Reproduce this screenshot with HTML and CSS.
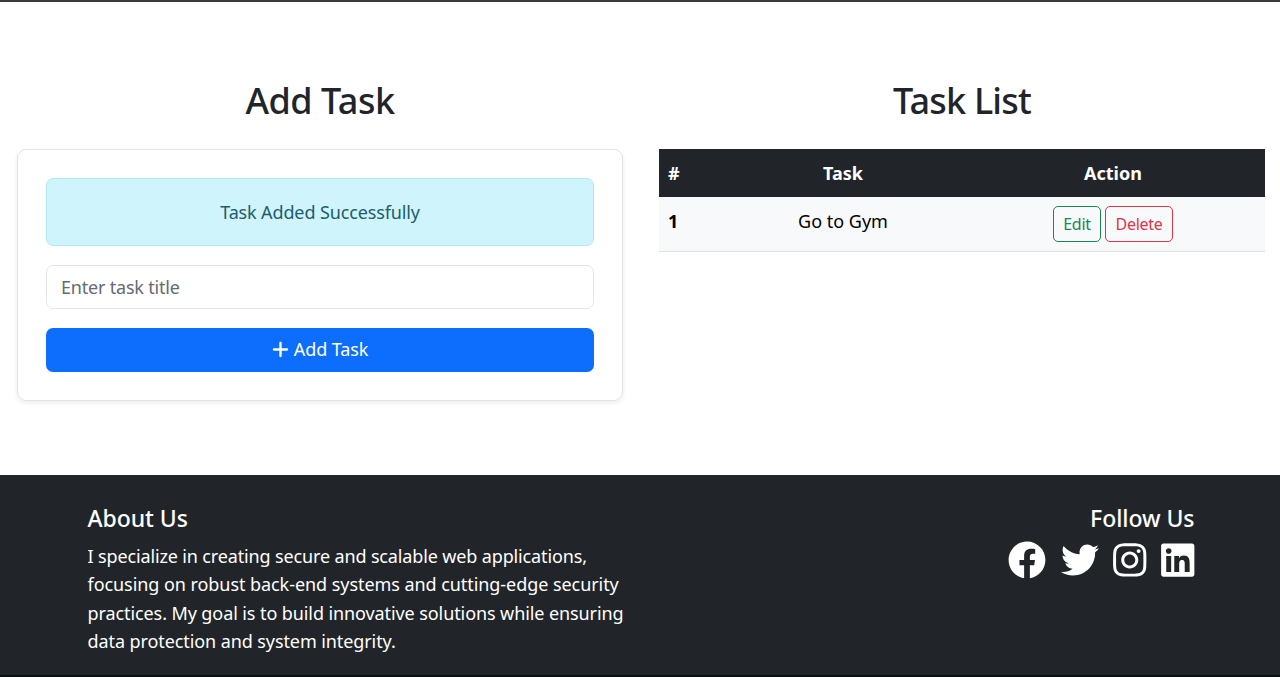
FILE: index.html
```html
<!DOCTYPE html>
<html lang="en">
<head>
<meta charset="utf-8">
<title>Task Manager</title>
<link rel="stylesheet" href="styles.css">
</head>
<body>
<main class="main">
  <section class="column">
    <h1 class="title title-add"><span>Add Task</span></h1>
    <div class="card">
      <div class="alert"><span>Task Added Successfully</span></div>
      <input class="input" type="text" placeholder="Enter task title">
      <button class="submit" type="button">
        <svg class="plus" viewBox="0 0 448 512"><path d="M256 80c0-17.700-14.300-32-32-32s-32 14.300-32 32V224H48c-17.700 0-32 14.300-32 32s14.300 32 32 32H192V432c0 17.700 14.300 32 32 32s32-14.300 32-32V288H400c17.700 0 32-14.300 32-32s-14.300-32-32-32H256V80z"/></svg>
        <span>Add Task</span>
      </button>
    </div>
  </section>
  <section class="column">
    <h1 class="title title-list"><span>Task List</span></h1>
    <table class="table">
      <colgroup><col class="col-num"><col class="col-task"><col class="col-action"></colgroup>
      <thead><tr><th class="num">#</th><th><span>Task</span></th><th class="action"><span>Action</span></th></tr></thead>
      <tbody><tr>
        <td class="num strong">1</td>
        <td><span class="task">Go to Gym</span></td>
        <td class="action"><div class="actions"><button class="btn edit" type="button">Edit</button><button class="btn delete" type="button">Delete</button></div></td>
      </tr></tbody>
    </table>
  </section>
</main>
<footer class="footer">
  <div class="about">
    <h2 class="subtitle"><span>About Us</span></h2>
    <p class="text"><span class="line-normal">I specialize in creating secure and scalable web applications,</span><br><span class="line-loose">focusing on robust back-end systems and cutting-edge security</span><br><span>practices. My goal is to build innovative solutions while ensuring</span><br><span>data protection and system integrity.</span></p>
  </div>
  <div class="follow">
    <h2 class="subtitle"><span>Follow Us</span></h2>
    <div class="social">
      <svg class="wide" viewBox="0 0 512 512"><path d="M504 256C504 119 393 8 256 8S8 119 8 256c0 123.780 90.690 226.380 209.250 245V327.690h-63V256h63v-54.640c0-62.150 37-96.480 93.670-96.480 27.140 0 55.520 4.840 55.520 4.840v61h-31.280c-30.800 0-40.410 19.120-40.410 38.730V256h68.780l-11 71.690h-57.780V501C413.310 482.380 504 379.780 504 256z"/></svg>
      <svg class="wide" viewBox="0 0 512 512"><path d="M459.370 151.716c.325 4.548.325 9.097.325 13.645 0 138.720-105.583 298.558-298.558 298.558-59.452 0-114.680-17.219-161.137-47.106 8.447.974 16.568 1.299 25.340 1.299 49.055 0 94.213-16.568 130.274-44.832-46.132-.975-84.792-31.188-98.112-72.772 6.498.974 12.995 1.624 19.818 1.624 9.421 0 18.843-1.300 27.614-3.573-48.081-9.747-84.143-51.980-84.143-102.985v-1.299c13.969 7.797 30.214 12.670 47.431 13.319-28.264-18.843-46.781-51.005-46.781-87.391 0-19.492 5.197-37.360 14.294-52.954 51.655 63.675 129.300 105.258 216.365 109.807-1.624-7.797-2.599-15.918-2.599-24.040 0-57.828 46.782-104.934 104.934-104.934 30.213 0 57.502 12.670 76.670 33.137 23.715-4.548 46.456-13.320 66.599-25.340-7.798 24.366-24.366 44.833-46.132 57.827 21.117-2.273 41.584-8.122 60.426-16.243-14.292 20.791-32.161 39.308-52.628 54.253z"/></svg>
      <svg class="narrow" viewBox="0 0 448 512"><path d="M224.100 141c-63.600 0-114.900 51.300-114.900 114.900s51.300 114.900 114.900 114.900S339 319.500 339 255.900 287.700 141 224.100 141zm0 189.600c-41.100 0-74.700-33.500-74.700-74.700s33.500-74.700 74.700-74.700 74.700 33.500 74.700 74.700-33.600 74.700-74.700 74.700zm146.400-194.300c0 14.900-12 26.800-26.800 26.800-14.900 0-26.800-12-26.800-26.800s12-26.800 26.800-26.800 26.800 12 26.800 26.800zm76.100 27.200c-1.700-35.900-9.900-67.700-36.200-93.900-26.200-26.200-58-34.400-93.900-36.200-37-2.100-147.900-2.100-184.900 0-35.800 1.700-67.600 9.900-93.900 36.100s-34.400 58-36.200 93.900c-2.100 37-2.100 147.900 0 184.900 1.700 35.900 9.900 67.700 36.200 93.900s58 34.400 93.900 36.200c37 2.100 147.900 2.100 184.900 0 35.900-1.700 67.700-9.900 93.900-36.200 26.200-26.200 34.400-58 36.200-93.900 2.100-37 2.100-147.800 0-184.800zM398.800 388c-7.800 19.600-22.900 34.700-42.600 42.600-29.500 11.700-99.500 9-132.100 9s-102.700 2.600-132.100-9c-19.600-7.800-34.700-22.900-42.600-42.600-11.700-29.500-9-99.500-9-132.100s-2.600-102.700 9-132.100c7.800-19.600 22.900-34.700 42.600-42.600 29.500-11.700 99.500-9 132.100-9s102.700-2.600 132.100 9c19.600 7.800 34.700 22.900 42.600 42.600 11.700 29.500 9 99.500 9 132.100s2.700 102.700-9 132.100z"/></svg>
      <svg class="narrow" viewBox="0 0 448 512"><path d="M416 32H31.900C14.300 32 0 46.500 0 64.300v383.400C0 465.500 14.300 480 31.900 480H416c17.600 0 32-14.500 32-32.300V64.300c0-17.800-14.400-32.300-32-32.300zM135.400 416H69V202.200h66.500V416zm-33.200-243c-21.300 0-38.500-17.300-38.500-38.500S80.900 96 102.200 96c21.200 0 38.500 17.300 38.500 38.500 0 21.300-17.200 38.500-38.500 38.500zm282.100 243h-66.400V312c0-24.800-.5-56.700-34.500-56.700-34.600 0-39.900 27-39.900 54.900V416h-66.400V202.200h63.700v29.200h.9c8.900-16.800 30.600-34.500 62.900-34.500 67.200 0 79.700 44.300 79.700 101.900V416z"/></svg>
    </div>
  </div>
</footer>
</body>
</html>
```
FILE: styles.css
```css
* { box-sizing: border-box; }
body {
  margin: 0;
  height: 677px;
  display: flex;
  flex-direction: column;
  overflow: hidden;
  background: #fff;
  color: #212529;
  border-top: 2px solid #3e3a3c;
  font: 18px/28.4px "Noto Sans", "Open Sans", sans-serif;
}
.main {
  height: 473px;
  padding: 76px 15px 0 17px;
  display: grid;
  grid-template-columns: 606px 606px;
  column-gap: 36px;
}
.title {
  margin: 0 0 26px;
  font-size: 36px;
  line-height: 45px;
  font-weight: 500;
  text-align: center;
  letter-spacing: -0.5px;
}
.title-list { letter-spacing: -0.8px; }
.card {
  height: 252px;
  padding: 28px;
  border: 1px solid #e2e3e5;
  border-radius: 9px;
  box-shadow: 0 2px 5px rgba(0, 0, 0, .075);
  display: flex;
  flex-direction: column;
}
.alert {
  height: 68px;
  margin-bottom: 19px;
  padding-top: 1px;
  display: grid;
  place-items: center;
  color: #1c5d6c;
  background: #cff4fc;
  border: 1px solid #b0e9f5;
  border-radius: 7px;
  letter-spacing: -0.13px;
}
.input {
  height: 44px;
  margin-bottom: 19px;
  padding: 0 14px;
  border: 1px solid #e2e5e8;
  border-radius: 7px;
  font: inherit;
  letter-spacing: -0.2px;
}
.input::placeholder { color: #656a6f; opacity: 1; }
.submit {
  height: 44px;
  padding: 0 0 1px;
  display: flex;
  align-items: center;
  justify-content: center;
  gap: 5px;
  border: 0;
  border-radius: 7px;
  background: #0d6efd;
  color: #fff;
  font: inherit;
  letter-spacing: -0.1px;
}
svg { fill: currentColor; display: block; }
.plus { width: 17px; height: 19px; }
.table {
  width: 606px;
  table-layout: fixed;
  border-collapse: separate;
  border-spacing: 0;
  text-align: center;
  color: #000;
}
.col-num { width: 46px; }
.col-task { width: 276px; }
.table th {
  height: 48px;
  padding: 0;
  background: #212529;
  color: #fff;
  font-weight: 700;
}
.table td {
  height: 55px;
  padding: 10px 0 8px;
  vertical-align: top;
  background: #f8f9fa;
  border-bottom: 1px solid #dfe0e1;
}
.table .num { padding-left: 9px; text-align: left; }
.table .action { padding-right: 20px; }
.strong { font-weight: 700; }
.actions { display: flex; justify-content: center; gap: 4px; margin-top: -1px; }
.btn {
  height: 36px;
  padding: 0;
  border: 1px solid;
  border-radius: 5px;
  background: transparent;
  font: 16px/24px "Noto Sans", "Open Sans", sans-serif;
  letter-spacing: -0.3px;
}
.edit { width: 48px; color: #198754; }
.delete { width: 68px; color: #dc3545; }
.footer {
  height: 202px;
  padding: 29px 85.5px 0 87.5px;
  display: flex;
  justify-content: space-between;
  background: #212529;
  color: #fff;
  border-bottom: 2px solid #0b1013;
}
.subtitle {
  margin: 0 0 9px;
  font-size: 23px;
  line-height: 29px;
  font-weight: 500;
  letter-spacing: -0.05px;
}
.text { margin: 0; white-space: nowrap; letter-spacing: -0.09px; }
.line-normal { letter-spacing: -0.14px; }
.line-loose { letter-spacing: -0.06px; }
.follow { text-align: right; }
.social { display: flex; gap: 14.5px; margin-top: -1px; }
.wide { width: 38px; height: 38px; }
.narrow { width: 33.500px; height: 38px; }
```
